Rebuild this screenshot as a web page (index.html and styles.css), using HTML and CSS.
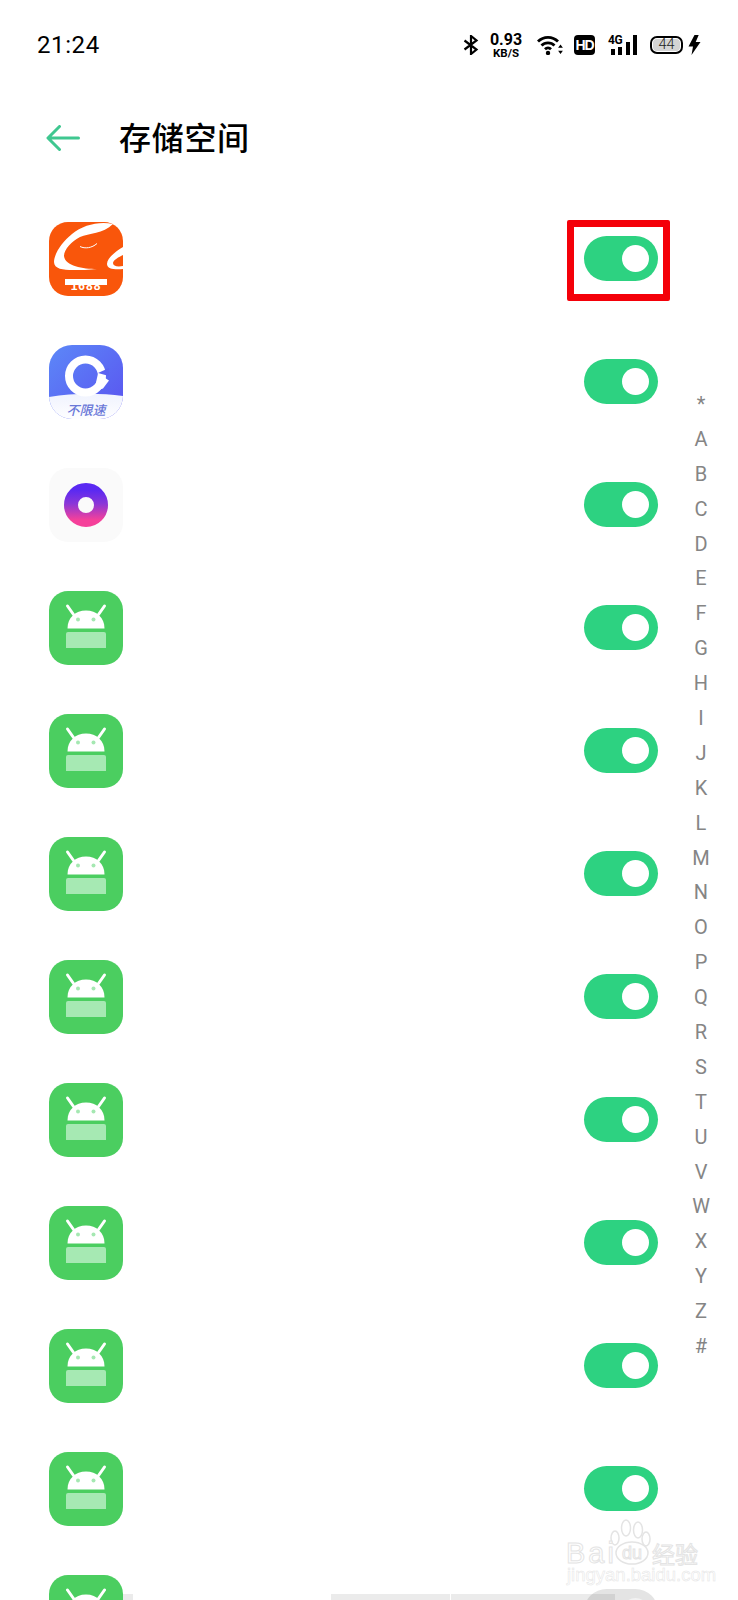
FILE: index.html
```html
<!DOCTYPE html>
<html lang="zh">
<head>
  <meta charset="utf-8" />
  <title>存储空间</title>
  <link rel="stylesheet" href="styles.css">
</head>
<body>
<div class="page">
  <svg class="defs" width="0" height="0">
    <symbol id="android" viewBox="0 0 74 74">
      <rect width="74" height="74" rx="19" fill="#4bce60"/>
      <path d="M18.500 15l6 8.500M55.500 15l-6 8.500" stroke="#fff" stroke-width="3" stroke-linecap="round"/>
      <path d="M18.500 37.500c0-11 8-18 18.500-18s18.500 7 18.500 18z" fill="#fff"/>
      <circle cx="29" cy="28.500" r="2" fill="#a5e8b2"/>
      <circle cx="44.500" cy="28.500" r="2" fill="#a5e8b2"/>
      <path d="M19 41h36a2 2 0 0 1 2 2v14h-40v-14a2 2 0 0 1 2-2z" fill="#a6e9b3"/>
    </symbol>
  </svg>

  <div class="status">
    <span class="time">21:24</span>
    <div class="status-icons">
      <svg class="ic-bt" width="16" height="20" viewBox="0 0 16 20"><path d="M1.500 5.500l12 9-5.500 4.500v-18l5.500 4.500-12 9" fill="none" stroke="#000" stroke-width="2.200"/></svg>
      <div class="speed"><b>0.93</b><b class="unit">KB/S</b></div>
      <svg class="ic-wifi" width="26" height="20" viewBox="0 0 26 20">
        <path d="M1 6.500c5.500-5.600 14.500-5.600 20 0M4.500 10.500c3.500-3.500 9.500-3.500 13 0M8 14.200c1.700-1.700 4.300-1.700 6 0" fill="none" stroke="#000" stroke-width="2.800"/>
        <circle cx="11" cy="18" r="2.200" fill="#000"/>
        <path d="M23.500 9.500l2.400 3.300h-4.800zM23.500 19l2.400-3.300h-4.800z" fill="#000"/>
      </svg>
      <span class="hd">HD</span>
      <div class="signal">
        <span class="net">4G</span>
        <i class="b1"></i><i class="b2"></i><i class="b3"></i><i class="b4"></i>
      </div>
      <div class="battery"><span class="level">44</span></div>
      <svg class="ic-bolt" width="13" height="20" viewBox="0 0 13 20"><path d="M6.500 0l-6 11.500h4.500l-1.500 8.500 9-13h-4.800l3-7z" fill="#000"/></svg>
    </div>
  </div>

  <div class="head">
    <svg class="back" width="34" height="26" viewBox="0 0 34 26"><path d="M13.500 1.500l-11.500 11.500 11.500 11.500M2.500 13h30" fill="none" stroke="#3fc790" stroke-width="3" stroke-linecap="round" stroke-linejoin="round"/></svg>
    <h1>存储空间</h1>
  </div>

  <div class="list">
    <div class="row">
      <svg class="app" viewBox="0 0 74 74">
        <defs><clipPath id="clip1688"><rect width="74" height="74" rx="19"/></clipPath></defs>
        <g clip-path="url(#clip1688)">
          <rect width="74" height="74" fill="#f9560b"/>
          <path d="M64 2c-14-3-30 1-41 10-10 8-18 20-18 28 0 7 9 8 19 8 8 0 16 0 24-1-14 0-32-3-33-13 0-7 8-15 16-19 9-4 23-3 33-13z" fill="#fff"/>
          <path d="M31 24.500c5 2.500 12 1.500 17-3" fill="none" stroke="#fff" stroke-width="1"/>
          <path d="M74 25c-8 5-16 11-16 17 0 5 8 6 16 5v-3c-6 1-10 0-10-3 0-3 6-6 10-8z" fill="#fff"/>
          <text class="logo-num" x="37" y="67.500" text-anchor="middle">1688</text>
          <rect x="16" y="57" width="42" height="6" fill="#fff"/>
        </g>
      </svg>
      <div class="switch"><span class="knob"></span></div>
      <div class="mark"></div>
    </div>
    <div class="row">
      <svg class="app" viewBox="0 0 74 74">
        <defs>
          <clipPath id="clipq"><rect width="74" height="74" rx="23"/></clipPath>
          <linearGradient id="qbg" x1="0" y1="0" x2="1" y2="1"><stop offset="0" stop-color="#5c88f8"/><stop offset="1" stop-color="#5a52ef"/></linearGradient>
          <linearGradient id="qfoot" x1="0" y1="0" x2="0" y2="1"><stop offset="0" stop-color="#f0f3fe"/><stop offset="1" stop-color="#fefeff"/></linearGradient>
        </defs>
        <g clip-path="url(#clipq)">
          <rect width="74" height="74" fill="url(#qbg)"/>
          <path d="M0 52c25-4 50-4 74-1v23h-74z" fill="url(#qfoot)"/>
          <circle cx="36.500" cy="31" r="16.500" fill="none" stroke="#fff" stroke-width="8"/>
          <path d="M49 28l11-5v8z" fill="#5a62f2"/>
          <path d="M49 28.500l11 7-6 8-9 3z" fill="#fff"/>
        </g>
        <text class="qtext" x="37" y="69.500" text-anchor="middle">不限速</text>
      </svg>
      <div class="switch"><span class="knob"></span></div>
    </div>
    <div class="row">
      <svg class="app" viewBox="0 0 74 74">
        <defs><linearGradient id="ring" x1="0" y1="0" x2="0" y2="1"><stop offset="0" stop-color="#5a29f2"/><stop offset="0.45" stop-color="#8a37d8"/><stop offset="1" stop-color="#f5409a"/></linearGradient></defs>
        <rect width="74" height="74" rx="19" fill="#fafafa"/>
        <circle cx="37" cy="37" r="15" fill="none" stroke="url(#ring)" stroke-width="14"/>
      </svg>
      <div class="switch"><span class="knob"></span></div>
    </div>
    <div class="row"><svg class="app"><use href="#android"/></svg><div class="switch"><span class="knob"></span></div></div>
    <div class="row"><svg class="app"><use href="#android"/></svg><div class="switch"><span class="knob"></span></div></div>
    <div class="row"><svg class="app"><use href="#android"/></svg><div class="switch"><span class="knob"></span></div></div>
    <div class="row"><svg class="app"><use href="#android"/></svg><div class="switch"><span class="knob"></span></div></div>
    <div class="row"><svg class="app"><use href="#android"/></svg><div class="switch"><span class="knob"></span></div></div>
    <div class="row"><svg class="app"><use href="#android"/></svg><div class="switch"><span class="knob"></span></div></div>
    <div class="row"><svg class="app"><use href="#android"/></svg><div class="switch"><span class="knob"></span></div></div>
    <div class="row"><svg class="app"><use href="#android"/></svg><div class="switch"><span class="knob"></span></div></div>
    <div class="row"><svg class="app"><use href="#android"/></svg><div class="switch off"><span class="knob"></span></div></div>
  </div>

  <div class="index">
    <span>*</span><span>A</span><span>B</span><span>C</span><span>D</span><span>E</span><span>F</span><span>G</span><span>H</span><span>I</span><span>J</span><span>K</span><span>L</span><span>M</span><span>N</span><span>O</span><span>P</span><span>Q</span><span>R</span><span>S</span><span>T</span><span>U</span><span>V</span><span>W</span><span>X</span><span>Y</span><span>Z</span><span>#</span>
  </div>

  <div class="toast">
    <i class="t1"></i><i class="t2"></i><i class="t3"></i>
  </div>

  <div class="watermark">
    <svg class="paw" width="46" height="48" viewBox="0 0 46 48">
      <g fill="#fff" stroke="#e4e4e4" stroke-width="1.500">
        <ellipse cx="9" cy="20" rx="4" ry="7"/>
        <ellipse cx="20" cy="10" rx="4.500" ry="8"/>
        <ellipse cx="32" cy="12" rx="4.500" ry="8"/>
        <ellipse cx="40" cy="21" rx="4" ry="7"/>
        <ellipse cx="26" cy="35" rx="16" ry="11"/>
      </g>
    </svg>
    <span class="wm-bai">Bai</span>
    <span class="wm-du">du</span>
    <span class="wm-jy">经验</span>
    <span class="wm-url">jingyan.baidu.com</span>
  </div>
</div>
</body>
</html>
```

FILE: styles.css
```css
html, body {
  margin: 0;
  padding: 0;
}
.page {
  width: 738px;
  height: 1600px;
  overflow: hidden;
  position: relative;
  background: #fff;
  color: #000;
  font-family: "Noto Sans CJK SC", "Roboto", sans-serif;
}
.defs {
  position: absolute;
}

/* status bar */
.status {
  height: 90px;
  padding: 28px 37px 0 37px;
  box-sizing: border-box;
  display: flex;
  justify-content: space-between;
  align-items: flex-start;
}
.time {
  font-family: "Roboto", sans-serif;
  font-size: 24px;
  line-height: 34px;
  letter-spacing: .6px;
}
.status-icons {
  display: flex;
  align-items: center;
  height: 34px;
}
.ic-bt {
  margin-right: 11px;
}
.speed {
  width: 32px;
  display: flex;
  flex-direction: column;
  align-items: center;
  font-family: "Roboto", sans-serif;
  margin-right: 15px;
}
.speed b {
  font-size: 16px;
  line-height: 15px;
  font-weight: 700;
}
.speed .unit {
  font-size: 11.500px;
  line-height: 10px;
  margin-top: 1px;
}
.ic-wifi {
  margin-right: 11px;
}
.hd {
  width: 21px;
  height: 20px;
  border-radius: 4px;
  background: #000;
  color: #fff;
  font-family: "Liberation Sans", sans-serif;
  font-size: 14px;
  font-weight: 700;
  line-height: 20px;
  text-align: center;
  letter-spacing: -1px;
  margin-right: 13px;
}
.signal {
  display: flex;
  justify-content: flex-end;
  align-items: flex-end;
  gap: 3.300px;
  height: 20px;
  position: relative;
  width: 29px;
  margin-right: 13px;
}
.net {
  position: absolute;
  left: 0;
  top: -1px;
  font-family: "Roboto", sans-serif;
  font-size: 12px;
  font-weight: 700;
  line-height: 12px;
  letter-spacing: -.5px;
}
.signal i {
  display: block;
  width: 4px;
  background: #000;
}
.signal .b1 { height: 6px; }
.signal .b2 { height: 8px; }
.signal .b3 { height: 13px; }
.signal .b4 { height: 20px; }
.battery {
  width: 33px;
  height: 18px;
  border: 2px solid #000;
  border-radius: 7px;
  box-sizing: border-box;
  padding: 1px;
  display: flex;
  margin-right: 5px;
}
.level {
  width: 100%;
  background: #d4d4d4;
  border-radius: 4px;
  font-family: "Roboto", sans-serif;
  font-size: 14.500px;
  font-weight: 300;
  line-height: 12px;
  text-align: center;
  color: #222;
}

/* title */
.head {
  height: 60px;
  padding: 16px 0 0 46px;
  display: flex;
  align-items: center;
}
.back {
  display: block;
  margin-top: 3px;
}
.head h1 {
  margin: 0 0 0 39px;
  font-size: 32px;
  font-weight: 500;
  line-height: 40px;
  letter-spacing: .7px;
}

/* app rows */
.list {
  padding: 56px 0 0 49px;
}
.row {
  height: 123px;
  width: 609px;
  display: flex;
  justify-content: space-between;
  position: relative;
}
.app {
  width: 74px;
  height: 74px;
  display: block;
}
.qtext {
  font-size: 13px;
  font-style: italic;
  font-weight: 500;
  fill: #6a78d8;
}
.logo-num {
  font-family: "Liberation Sans", sans-serif;
  font-size: 12px;
  font-weight: 700;
  letter-spacing: 1px;
  fill: #fff;
}
.switch {
  width: 74px;
  height: 45px;
  margin-top: 14px;
  border-radius: 23px;
  background: #2dd281;
  position: relative;
}
.knob {
  position: absolute;
  right: 9px;
  top: 9px;
  width: 27px;
  height: 27px;
  border-radius: 50%;
  background: #fff;
}
.switch.off {
  background: #e4e4e4;
}
.switch.off .knob {
  background: #f2f2f2;
}
.mark {
  position: absolute;
  left: 518px;
  top: -2px;
  width: 89px;
  height: 67px;
  border: 7px solid #f40009;
  border-radius: 2px;
}

/* letter index */
.index {
  position: absolute;
  right: 17px;
  top: 387px;
  width: 40px;
  display: flex;
  flex-direction: column;
  align-items: center;
  font-family: "Roboto", sans-serif;
  font-size: 20px;
  color: #858585;
}
.index span {
  height: 34.900px;
  line-height: 34.900px;
}

/* bottom bar peeking in */
.toast {
  position: absolute;
  left: 0;
  right: 0;
  bottom: 0;
  height: 6px;
}
.toast i {
  position: absolute;
  top: 0;
  height: 6px;
  background: rgba(0, 0, 0, .08);
}
.toast .t1 { left: 123px; width: 10px; }
.toast .t2 { left: 331px; width: 119px; }
.toast .t3 { left: 451px; width: 164px; }

/* watermark */
.watermark {
  position: absolute;
  left: 566px;
  top: 1518px;
  width: 132px;
  height: 70px;
  color: #fff;
  font-family: "Liberation Sans", sans-serif;
  -webkit-text-stroke: 1px #e4e4e4;
}
.watermark span {
  position: absolute;
  white-space: nowrap;
}
.paw {
  position: absolute;
  left: 40px;
  top: 0;
}
.wm-bai {
  left: 0;
  top: 23px;
  font-size: 29px;
  line-height: 24px;
  letter-spacing: 3px;
}
.wm-du {
  left: 56px;
  top: 26px;
  font-size: 18px;
  line-height: 18px;
}
.wm-jy {
  left: 86px;
  top: 23px;
  font-family: "Noto Sans CJK SC", sans-serif;
  font-size: 23px;
  line-height: 24px;
}
.wm-url {
  left: 1px;
  top: 48px;
  font-size: 18.500px;
  line-height: 18px;
  -webkit-text-stroke: .5px #e4e4e4;
}
```
